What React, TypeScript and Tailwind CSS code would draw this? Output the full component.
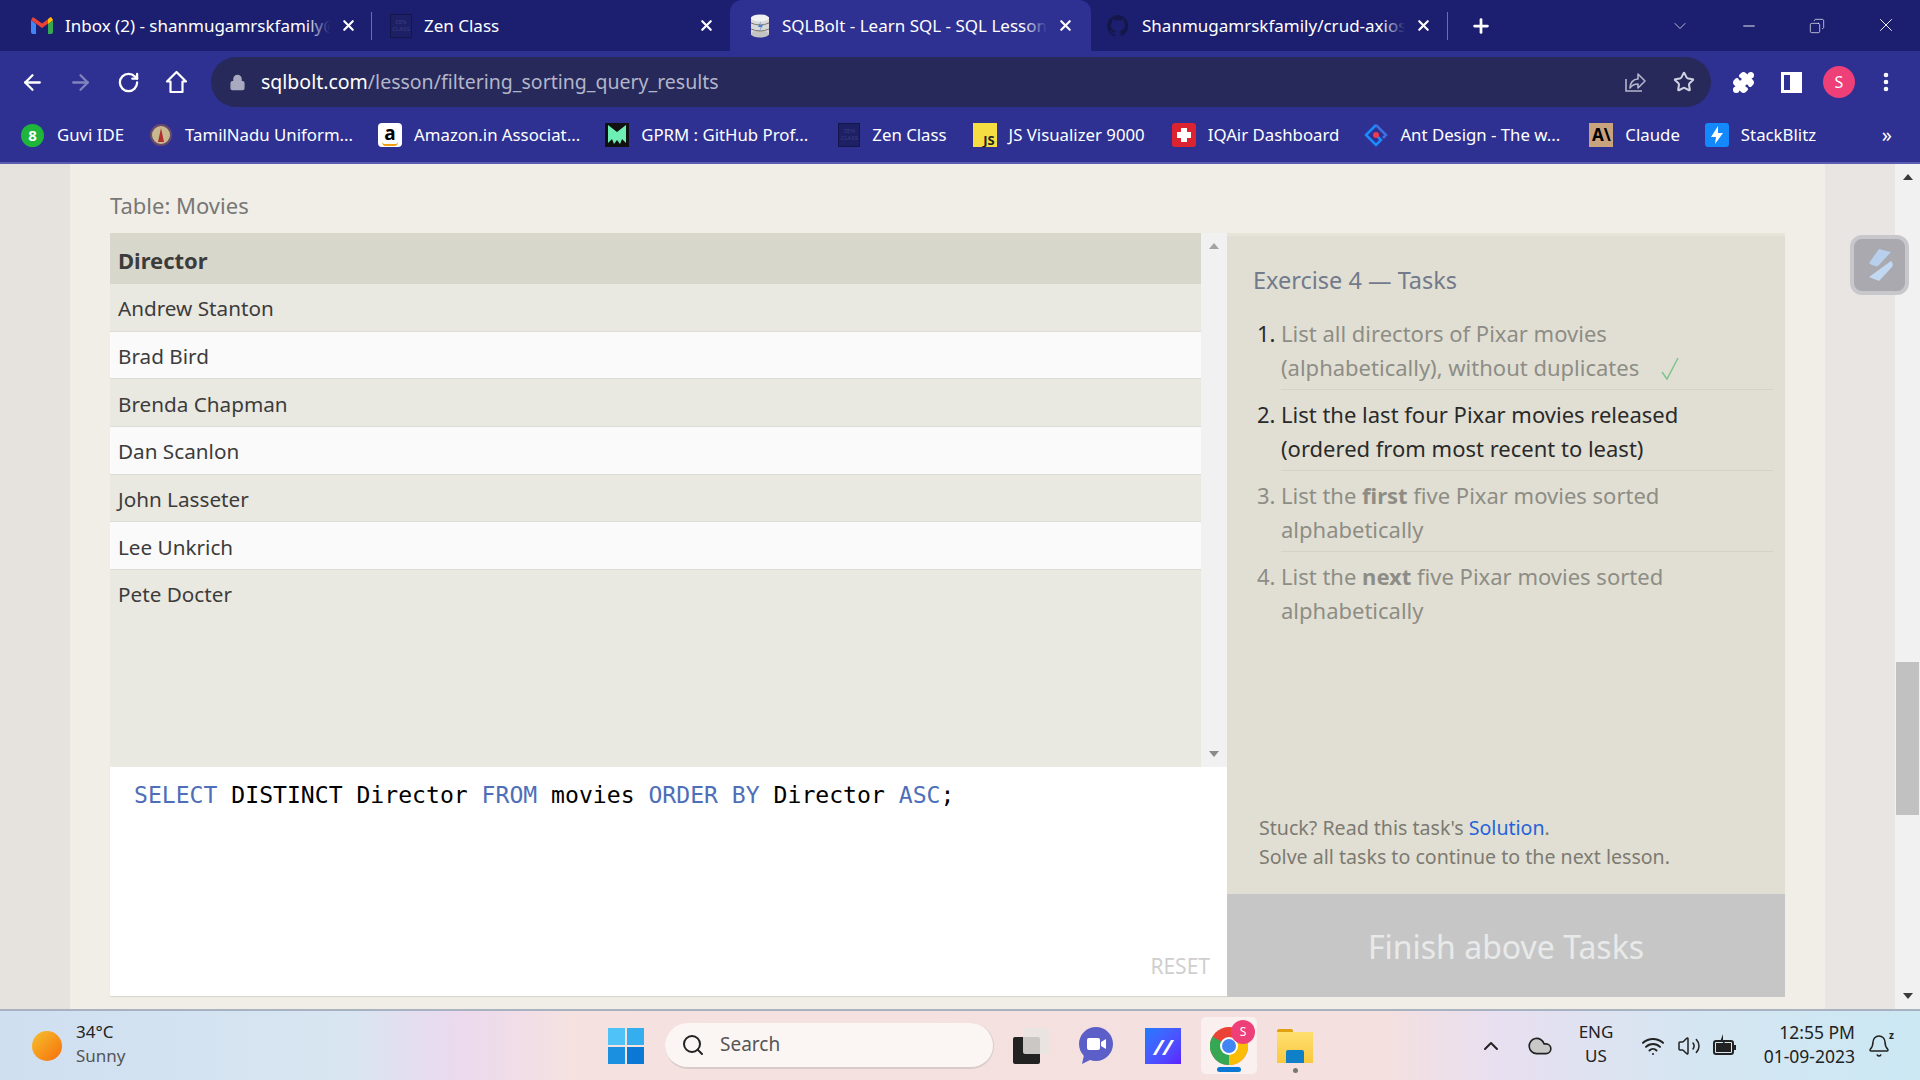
import React from "react";
import {
  ArrowLeft,
  ArrowRight,
  Bell,
  ChevronDown,
  ChevronUp,
  Cloud,
  Copy,
  Lock,
  Minus,
  MoreVertical,
  Plus,
  Puzzle,
  RotateCw,
  Search,
  Star,
  Volume2,
  Wifi,
  X,
} from "lucide-react";

const ui = "font-['Noto_Sans',sans-serif]";

const ZenIcon = () => (
  <div className="w-[22px] h-[24px] border border-[#15174a] bg-[#1e2066] flex items-center justify-center text-[6px] leading-[7px] text-[#3a3d80] text-center shrink-0">
    ZEN
    <br />
    CLASS
  </div>
);

const GmailIcon = () => (
  <svg width="22" height="17" viewBox="0 0 22 17" className="shrink-0">
    <path d="M0 3v12a2 2 0 0 0 2 2h3V7z" fill="#4285f4" />
    <path d="M22 3v12a2 2 0 0 1-2 2h-3V7z" fill="#34a853" />
    <path d="M0 3l11 8 11-8-2-3-9 6.500L2 0z" fill="#ea4335" />
    <path d="M17 7l5-4-2-3-3 2z" fill="#fbbc04" />
  </svg>
);

const DbIcon = () => (
  <svg width="20" height="24" viewBox="0 0 20 24" className="shrink-0">
    <rect x="1" y="3" width="18" height="18" fill="#d8d8d8" />
    <ellipse cx="10" cy="4" rx="9" ry="3.500" fill="#f1f1f1" />
    <ellipse cx="10" cy="20" rx="9" ry="3.500" fill="#c4c4c4" />
    <path d="M1 9q9 4 18 0M1 15q9 4 18 0" stroke="#777" fill="none" />
    <path d="M11 7l-3 6h3l-2 5 4-7h-3z" fill="#3f7fd0" />
  </svg>
);

const GithubIcon = () => (
  <svg width="24" height="24" viewBox="0 0 24 24" className="shrink-0">
    <path
      d="M12 1a11 11 0 0 0-3.500 21.400c.5.100.7-.2.700-.5v-2c-3 .6-3.700-1.400-3.700-1.400-.5-1.200-1.200-1.600-1.200-1.600-1-.7.100-.7.100-.7 1.100.1 1.700 1.100 1.700 1.100 1 1.700 2.600 1.200 3.200.9.100-.7.400-1.200.7-1.500-2.400-.3-5-1.200-5-5.400 0-1.200.4-2.200 1.100-2.900-.1-.3-.5-1.400.1-2.900 0 0 .9-.3 3 1.100a10 10 0 0 1 5.500 0c2.100-1.400 3-1.100 3-1.100.6 1.500.2 2.600.1 2.900.7.700 1.100 1.700 1.100 2.900 0 4.200-2.600 5.100-5 5.400.4.300.7 1 .7 2v3c0 .3.200.6.700.5A11 11 0 0 0 12 1z"
      fill="#15174a"
    />
  </svg>
);

const Tab = ({
  w,
  pl,
  pr,
  icon,
  title,
  sep,
  active,
}: {
  w: string;
  pl: string;
  pr: string;
  icon: React.ReactNode;
  title: string;
  sep?: boolean;
  active?: boolean;
}) => (
  <div className={`${w} ${pl} ${pr} h-full flex items-center relative shrink-0 ${active ? "bg-[#2e3192] rounded-t-[12px]" : ""}`}>
    {icon}
    <div className="relative flex-1 min-w-0 ml-[12px] mr-[10px] overflow-hidden whitespace-nowrap text-[17px] text-white">
      {title}
      <div
        className={`absolute right-0 top-0 h-full w-[24px] bg-gradient-to-r from-transparent ${
          active ? "to-[#2e3192]" : "to-[#1c1f6f]"
        }`}
      />
    </div>
    <X size={17} strokeWidth={3} className="text-white shrink-0" />
    {sep && <div className="absolute right-0 top-[12px] h-[28px] w-px bg-[#6b6ea8]" />}
  </div>
);

const TabStrip = () => (
  <div className="h-[51px] bg-[#1c1f6f] flex items-end shrink-0">
    <Tab sep w="w-[372px]" pl="pl-[31px]" pr="pr-[15px]" icon={<GmailIcon />} title="Inbox (2) - shanmugamrskfamily@" />
    <Tab w="w-[358px]" pl="pl-[18px]" pr="pr-[15px]" icon={<ZenIcon />} title="Zen Class" />
    <Tab active w="w-[361px]" pl="pl-[20px]" pr="pr-[17px]" icon={<DbIcon />} title="SQLBolt - Learn SQL - SQL Lesson" />
    <Tab sep w="w-[357px]" pl="pl-[15px]" pr="pr-[16px]" icon={<GithubIcon />} title="Shanmugamrskfamily/crud-axios" />
    <Plus size={22} strokeWidth={3} className="text-white ml-[22px] mb-[14px] shrink-0" />
    <div className="flex-1" />
    <ChevronDown size={20} strokeWidth={1} className="text-[#d8d8ea] mb-[15px]" />
    <Minus size={18} strokeWidth={1.2} className="text-white ml-[50px] mb-[16px]" />
    <Copy size={16} strokeWidth={1} className="text-white ml-[51px] mb-[17px] -scale-x-100" />
    <X size={22} strokeWidth={1} className="text-white ml-[50px] mr-[23px] mb-[15px]" />
  </div>
);

const Toolbar = () => (
  <div className="h-[59px] bg-[#2e3192] flex items-center shrink-0 pl-[20px] pt-[3px]">
    <ArrowLeft size={25} strokeWidth={2.2} className="text-white" />
    <ArrowRight size={25} strokeWidth={2.2} className="text-[#8183bd] ml-[23px]" />
    <RotateCw size={23} strokeWidth={2.4} className="text-white ml-[24px]" />
    <svg width="23" height="24" viewBox="0 0 23 24" className="ml-[25px]">
      <path d="M11.500 2L2 11.500h3.500V22h12V11.500H21z" fill="none" stroke="white" strokeWidth="2.200" strokeLinejoin="round" />
    </svg>
    <div className="ml-[23px] w-[1500px] h-[50px] rounded-full bg-[#26295a] flex items-center pl-[18px] pr-[16px]">
      <Lock size={17} fill="#a9aac0" strokeWidth={2} className="text-[#a9aac0]" />
      <div className="ml-[15px] text-[19.500px] whitespace-nowrap text-[#b4b5c9]">
        <span className="text-white">sqlbolt.com</span>/lesson/filtering_sorting_query_results
      </div>
      <div className="flex-1" />
      <svg width="24" height="24" viewBox="0 0 24 24" fill="none" stroke="#b5b6cb" strokeWidth="1.600" className="mr-[2px]">
        <path d="M3 9v12h16" />
        <path d="M7 18c0-5 3-9 8-9V4l7 7-7 7v-4c-4 0-6 1-8 4z" strokeLinejoin="round" />
      </svg>
      <Star size={22} strokeWidth={2.2} className="text-[#d0d1e0] ml-[24px]" />
    </div>
    <Puzzle size={23} fill="white" strokeWidth={2} className="text-white ml-[21px]" />
    <div className="ml-[26px] w-[21px] h-[21px] border-[3px] border-white flex justify-end">
      <div className="w-[9px] h-full bg-white" />
    </div>
    <div className="ml-[21px] w-[32px] h-[32px] rounded-full bg-[#ee3f78] flex items-center justify-center text-white text-[16px]">
      S
    </div>
    <MoreVertical size={24} strokeWidth={2.6} className="text-white ml-[19px]" />
  </div>
);

const bookmarks: { label: string; extra?: string; icon: React.ReactNode }[] = [
  {
    label: "Guvi IDE",
    icon: (
      <div className="w-[23px] h-[23px] rounded-full bg-[#1eb53a] text-white text-[15px] leading-[23px] text-center font-bold mr-[1px]">8</div>
    ),
  },
  {
    label: "TamilNadu Uniform...",
    icon: (
      <svg width="24" height="24" viewBox="0 0 24 24">
        <circle cx="12" cy="12" r="10" fill="#c9b98f" stroke="#6a4a6a" strokeWidth="2" />
        <path d="M9 19l3-14 3 14z" fill="#b03030" />
      </svg>
    ),
  },
  {
    label: "Amazon.in Associat...",
    icon: (
      <div className="w-[24px] h-[24px] rounded-[4px] bg-white text-black text-[19px] leading-[20px] font-bold text-center relative">
        a
        <div className="absolute bottom-[1px] left-[4px] w-[16px] h-[4px] border-b-2 border-[#f39c12] rounded-b-full" />
      </div>
    ),
  },
  {
    label: "GPRM : GitHub Prof...",
    icon: (
      <svg width="24" height="24" viewBox="0 0 24 24">
        <rect width="24" height="24" fill="#111" />
        <path d="M3 2l9 7 9-7v18l-4-4-2 5-3-4-3 4-2-5-4 4z" fill="#6ef0b4" />
      </svg>
    ),
  },
  { label: "Zen Class", extra: "ml-[5px]", icon: <ZenIcon /> },
  {
    label: "JS Visualizer 9000",
    extra: "ml-[1px]",
    icon: (
      <div className="w-[24px] h-[24px] bg-[#f5dd42] text-[#222] text-[13px] font-bold flex items-end justify-end pr-[2px] leading-[14px]">
        JS
      </div>
    ),
  },
  {
    label: "IQAir Dashboard",
    extra: "ml-[2px]",
    icon: (
      <svg width="24" height="24" viewBox="0 0 24 24">
        <rect width="24" height="24" rx="3" fill="#dc2430" />
        <path d="M9 5h6v4h4v6h-4v4H9v-4H5V9h4z" fill="#fff" />
      </svg>
    ),
  },
  {
    label: "Ant Design - The w...",
    icon: (
      <svg width="24" height="24" viewBox="0 0 24 24">
        <path d="M12 2L2 12l10 10 5-5-5-5" fill="none" stroke="#1a8cff" strokeWidth="2.500" />
        <path d="M12 2l10 10-3 3" fill="none" stroke="#3f6fe0" strokeWidth="2.500" />
        <circle cx="12" cy="12" r="3" fill="#f0384f" />
      </svg>
    ),
  },
  {
    label: "Claude",
    extra: "ml-[4px]",
    icon: (
      <div className="w-[24px] h-[24px] bg-[#c9a27e] text-black text-[17px] font-bold leading-[24px] text-center">A\</div>
    ),
  },
  {
    label: "StackBlitz",
    icon: (
      <svg width="24" height="24" viewBox="0 0 24 24">
        <rect width="24" height="24" rx="3" fill="#1389fd" />
        <path d="M13 3L6 14h5l-1 7 8-11h-5z" fill="#fff" />
      </svg>
    ),
  },
];

const BookmarksBar = () => (
  <div className={`h-[54px] bg-[#2e3192] border-b-2 border-[#5a5db0] flex items-center shrink-0 pl-[21px] pr-[28px] pb-[2px] text-white text-[16.800px] ${ui}`}>
    <div className="flex items-center gap-[25px]">
      {bookmarks.map((b) => (
        <div key={b.label} className={`flex items-center gap-[12px] whitespace-nowrap ${b.extra ?? ""}`}>
          {b.icon}
          <span>{b.label}</span>
        </div>
      ))}
    </div>
    <div className="flex-1" />
    <span className="text-[20px] leading-none">»</span>
  </div>
);

const directors = ["Andrew Stanton", "Brad Bird", "Brenda Chapman", "Dan Scanlon", "John Lasseter", "Lee Unkrich", "Pete Docter"];

const ResultTable = () => (
  <div className="flex h-[534px]">
    <div className="w-[1091px] bg-[#e9e8e1] text-[#3c3c3c] text-[20.700px]">
      <div className="h-[51px] bg-[#d8d7cb] flex items-center px-[8px] pt-[4px] font-bold text-[22px]">Director</div>
      {directors.map((d, i) => (
        <div
          key={d}
          className={`h-[47.700px] flex items-center px-[8px] pt-[3px] border-b ${
            i === 6 ? "border-transparent" : "border-[#dcdcd6]"
          } ${i % 2 === 1 ? "bg-[#fafafa]" : "bg-[#e9e8e1]"}`}
        >
          {d}
        </div>
      ))}
    </div>
    <div className="w-[26px] bg-[#f1f1f1] flex flex-col items-center justify-between py-[10px]">
      <div className="w-0 h-0 border-x-[5px] border-x-transparent border-b-[6px] border-b-[#a3a3a3]" />
      <div className="w-0 h-0 border-x-[5px] border-x-transparent border-t-[6px] border-t-[#8a8a8a]" />
    </div>
  </div>
);

const Editor = () => (
  <div className="h-[229px] w-[1117px] bg-white relative pl-[24px] pt-[13px] shadow-[0_1px_1px_#d8d8d0]">
    <div className="font-['DejaVu_Sans_Mono',monospace] text-[23.100px] leading-[30px] text-black whitespace-pre">
      <span className="text-[#4e6fb8]">SELECT</span> DISTINCT Director <span className="text-[#4e6fb8]">FROM</span> movies{" "}
      <span className="text-[#4e6fb8]">ORDER BY</span> Director <span className="text-[#4e6fb8]">ASC</span>;
    </div>
    <div className="absolute right-[17px] bottom-[14px] text-[21px] text-[#cfcfcf]">RESET</div>
  </div>
);

const tasks = [
  { n: "1.", lines: <>List all directors of Pixar movies<br />(alphabetically), without duplicates</>, state: "done" },
  { n: "2.", lines: <>List the last four Pixar movies released<br />(ordered from most recent to least)</>, state: "now" },
  { n: "3.", lines: <>List the <b>first</b> five Pixar movies sorted<br />alphabetically</>, state: "todo" },
  { n: "4.", lines: <>List the <b>next</b> five Pixar movies sorted<br />alphabetically</>, state: "todo" },
];

const TasksPanel = () => (
  <div className="w-[558px] h-[764px] flex flex-col bg-[#e1dfd3] border-t-[3px] border-[#e6e5da]">
    <div className="flex-1 pl-[26px] pr-[12px] pt-[28px] relative">
      <div className="text-[23.500px] leading-[32px] text-[#727a8c]">Exercise 4 — Tasks</div>
      <div className="mt-[21px]">
        {tasks.map((t, i) => (
          <div key={t.n} className="flex text-[22px] leading-[33.500px]">
            <div className={`w-[28px] pl-[4px] shrink-0 ${t.state === "todo" ? "text-[#8d8d86]" : "text-[#2a2a2a]"}`}>{t.n}</div>
            <div
              className={`flex-1 pb-[5px] mb-[8px] relative ${i < 3 ? "border-b border-[#d5d3c6]" : ""} ${
                t.state === "now" ? "text-[#2a2a2a]" : "text-[#8d8d86]"
              }`}
            >
              {t.lines}
              {t.state === "done" && (
                <svg width="18" height="24" viewBox="0 0 18 24" fill="none" stroke="#7ec48e" strokeWidth="1.500" className="absolute left-[380px] top-[40px]">
                  <path d="M1 15l5 7L17 1" />
                </svg>
              )}
            </div>
          </div>
        ))}
      </div>
      <div className="absolute left-[32px] bottom-[23px] text-[19.600px] leading-[29px] text-[#7d7a72]">
        Stuck? Read this task's <span className="text-[#2563d8]">Solution</span>.
        <br />
        Solve all tasks to continue to the next lesson.
      </div>
    </div>
    <div className="h-[103px] bg-[#c6c6c6] flex items-center justify-center pt-[2px] text-[32px] text-[#e8eaea]">Finish above Tasks</div>
  </div>
);

const PageScrollbar = () => (
  <div className="w-[25px] bg-[#f1f1f1] flex flex-col items-center relative">
    <div className="mt-[10px] w-0 h-0 border-x-[5px] border-x-transparent border-b-[6px] border-b-[#3a3a3a]" />
    <div className="absolute top-[498px] left-[1px] w-[23px] h-[153px] bg-[#c1c1c1]" />
    <div className="absolute bottom-[10px] w-0 h-0 border-x-[5px] border-x-transparent border-t-[6px] border-t-[#3a3a3a]" />
  </div>
);

const Page = () => (
  <div className={`flex-1 flex min-h-0 relative ${ui}`}>
    <div className="w-[70px] bg-[#e6e2de]" />
    <div className="flex-1 bg-[#f0eee6] pl-[40px]">
      <div className="h-[69px] pt-[24px] text-[22px] leading-[34px] text-[#777]">Table: Movies</div>
      <div className="flex">
        <div className="flex flex-col">
          <ResultTable />
          <Editor />
        </div>
        <TasksPanel />
      </div>
    </div>
    <div className="w-[70px] bg-[#e9e5e2]" />
    <PageScrollbar />
    <div className="absolute right-[11px] top-[71px] w-[59px] h-[60px] rounded-[12px] border-[4px] border-[#c8c7cb] bg-[#a9a9af] flex items-center justify-center">
      <svg width="30" height="36" viewBox="0 0 30 36">
        <path d="M14 2l12 3-13 14q-5 1-9-3z" fill="#b8cfee" />
        <path d="M26 14q3 3 1 6L14 34l-10-4z" fill="#c2d8f2" />
      </svg>
    </div>
  </div>
);

const ChromeIcon = () => (
  <svg width="38" height="38" viewBox="0 0 38 38">
    <circle cx="19" cy="19" r="19" fill="#ea4335" />
    <path d="M19 19L2.500 28.500A19 19 0 0 0 19 38z" fill="#34a853" />
    <path d="M2.500 28.500A19 19 0 0 1 2.500 9.500L19 19z" fill="#34a853" />
    <path d="M19 19l16.500-9.500A19 19 0 0 1 19 38z" fill="#fbbc04" />
    <circle cx="19" cy="19" r="9" fill="#fff" />
    <circle cx="19" cy="19" r="7" fill="#4285f4" />
  </svg>
);

const Taskbar = () => (
  <div
    className={`h-[71px] shrink-0 border-t-2 border-[#a8b2c0] flex items-center relative bg-[linear-gradient(90deg,#cfdff0_0%,#d8e6f2_18%,#ecd9ee_24%,#f5e2e0_30%,#f4e0df_72%,#e8dff0_78%,#d5e6f2_88%,#cbe8f3_100%)] ${ui}`}
  >
    <div className="w-[30px] h-[30px] rounded-full bg-gradient-to-br from-[#f3c02c] to-[#f56c08] ml-[32px]" />
    <div className="ml-[14px] mb-[4px] w-[62px] text-[17px] leading-[24px]">
      <div className="text-[#222]">34°C</div>
      <div className="text-[#555]">Sunny</div>
    </div>
    <div className="ml-[470px] grid grid-cols-2 gap-[2px] w-[36px] h-[36px]">
      <div className="bg-[#4fc3f7]" />
      <div className="bg-[#35aef0]" />
      <div className="bg-[#1b8fe0]" />
      <div className="bg-[#0a78d4]" />
    </div>
    <div className="ml-[21px] w-[329px] h-[46px] rounded-full bg-[#fbf5f3] border-b-2 border-r border-[#d8ccca] flex items-center pl-[16px]">
      <Search size={24} strokeWidth={2} className="text-[#222]" />
      <span className="ml-[15px] text-[19px] text-[#555]">Search</span>
    </div>
    <div className="ml-[19px] w-[36px] h-[36px] relative">
      <div className="absolute left-0 bottom-0 w-[27px] h-[27px] bg-[#222] rounded-[2px]" />
      <div className="absolute right-0 top-0 w-[26px] h-[26px] bg-[#e8e4e2]/85 rounded-[2px]" />
    </div>
    <svg width="34" height="38" viewBox="0 0 34 38" className="ml-[30px]">
      <ellipse cx="17" cy="17" rx="17" ry="17" fill="#5b5fc7" />
      <path d="M5 28l-2 9 10-5z" fill="#5b5fc7" />
      <rect x="8" y="11" width="13" height="12" rx="2" fill="#fff" />
      <path d="M22 15l5-3v10l-5-3z" fill="#fff" />
    </svg>
    <div className="ml-[32px] w-[36px] h-[36px] bg-gradient-to-br from-[#1d7bff] to-[#5a1fff] flex items-center justify-center text-white text-[22px] font-bold italic leading-none">
      //
    </div>
    <div className="ml-[20px] w-[56px] h-[57px] rounded-[5px] bg-white/50 flex flex-col items-center relative pt-[10px]">
      <ChromeIcon />
      <div className="absolute right-[2px] top-[3px] w-[24px] h-[24px] rounded-full bg-[#ee3f78] text-white text-[12px] leading-[24px] text-center">S</div>
      <div className="absolute bottom-[2px] w-[24px] h-[5px] rounded-full bg-[#0a78d4]" />
    </div>
    <div className="ml-[20px] w-[36px] h-[34px] relative">
      <div className="absolute left-0 top-0 w-[16px] h-[8px] bg-[#e0a010] rounded-t-[2px]" />
      <div className="absolute left-0 top-[3px] w-full h-[31px] bg-gradient-to-b from-[#ffdf70] to-[#f9c83c]" />
      <div className="absolute left-[9px] bottom-0 w-[18px] h-[13px] bg-[#0f7fc8] rounded-t-[2px]" />
      <div className="absolute left-[16px] bottom-[-10px] w-[5px] h-[5px] rounded-full bg-[#777]" />
    </div>
    <ChevronUp size={24} strokeWidth={2} className="ml-[166px] text-[#222]" />
    <Cloud size={26} strokeWidth={1.5} fill="#c8c8c8" className="ml-[24px] text-[#222]" />
    <div className="ml-[21px] mb-[4px] w-[44px] text-center text-[17px] leading-[24px] text-[#222]">
      <div>ENG</div>
      <div>US</div>
    </div>
    <Wifi size={24} strokeWidth={2} className="ml-[23px] text-[#222]" />
    <Volume2 size={24} strokeWidth={1.5} className="ml-[12px] text-[#222]" />
    <svg width="26" height="26" viewBox="0 0 26 26" className="ml-[11px]">
      <rect x="2" y="8" width="19" height="13" rx="2" fill="none" stroke="#222" strokeWidth="2" />
      <rect x="22" y="12" width="2" height="5" fill="#222" />
      <rect x="4" y="10" width="15" height="9" fill="#222" />
      <path d="M11 1l-3 8h3l-1 5 4-7h-3z" fill="#222" />
    </svg>
    <div className="ml-[22px] mb-[4px] w-[95px] text-right text-[17.500px] leading-[24px] text-[#222] whitespace-nowrap">
      <div>12:55 PM</div>
      <div>01-09-2023</div>
    </div>
    <div className="ml-[12px] relative">
      <Bell size={24} strokeWidth={1.5} className="text-[#222]" />
      <span className="absolute right-[-3px] top-[-6px] text-[10px] font-bold text-[#222]">z</span>
    </div>
  </div>
);

const App = () => {
  return (
    <div className={`w-[1920px] h-[1080px] overflow-hidden flex flex-col ${ui}`}>
      <TabStrip />
      <Toolbar />
      <BookmarksBar />
      <Page />
      <Taskbar />
    </div>
  );
};

export default App;
